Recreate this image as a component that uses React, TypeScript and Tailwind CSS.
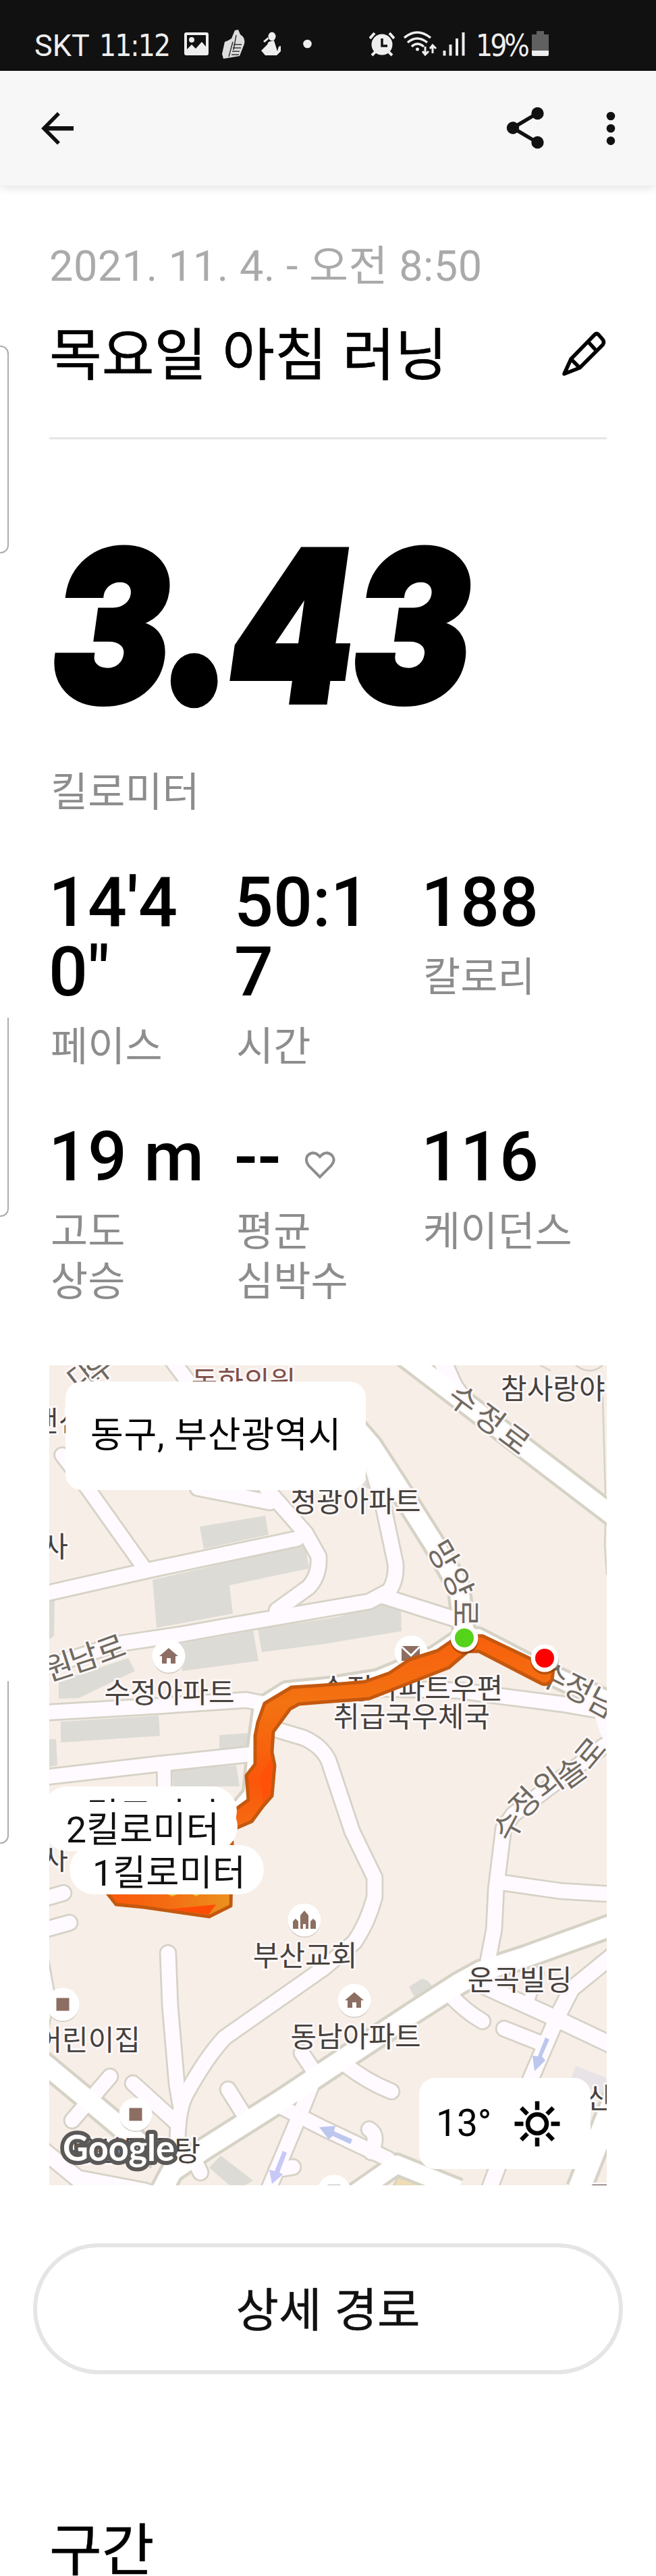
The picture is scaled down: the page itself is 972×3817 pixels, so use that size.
import type { ReactNode } from 'react';

const stats = [
    { value: `14'40"`, label: '페이스' },
    { value: '50:17', label: '시간' },
    { value: '188', label: '칼로리' },
    { value: '19 m', label: '고도\n상승' },
    { value: '--', label: '평균\n심박수', heart: true },
    { value: '116', label: '케이던스' },
];

// [path, width] of the narrow streets
const streets: [string, number][] = [
    ['M60 2364 L73 2361 L223 2327 L440 2281', 22],
    ['M92 2157 L131 2208 L212 2322', 21],
    ['M250 2010 L280 2050 L400 2213 L453 2273 L472 2307 Q474 2335 457 2353 L410 2387', 22],
    ['M293 2206 L400 2227', 22],
    ['M60 2474 L173 2437 L267 2423 L333 2411 L547 2374 L577 2358 Q588 2340 586 2318 L568 2233 L550 2170', 22],
    ['M567 2366 L690 2405', 22],
    ['M652 2010 L672 2055 L690 2080', 26],
    ['M60 2539 L233 2529 L365 2520 L395 2526', 22],
    ['M60 2635 L233 2615 L375 2600', 22],
    ['M243 2618 L244 2670', 20],
    ['M560 2503 L680 2506 L747 2515 L833 2526 L915 2540', 22],
    ['M910 2530 L910 2580 L895 2588 L760 2690 L746 2710 L735 2800 L732 2860 L722 2912', 22],
    ['M740 2790 L830 2803 L910 2808', 22],
    ['M400 2561 L450 2576 Q477 2588 487 2610 L522 2715 L555 2783 L555 2812 Q545 2850 525 2879 L480 2917 L333 3020 Q305 3050 275 3105 Q262 3130 263 3190', 22],
    ['M249 2895 L252 2973 L262 3090 L268 3125', 22],
    ['M163 3078 L107 3143', 22],
    ['M197 3088 L262 3147', 22],
    ['M338 3097 L368 3145', 22],
    ['M447 3043 L470 3077', 22],
    ['M297 3220 L285 3195', 22],
    ['M462 3090 L442 3140 L398 3245', 22],
    ['M415 3122 L480 3155 L575 3200', 22],
    ['M434 3212 L410 3216', 22],
    ['M547 3156 Q562 3165 550 3190', 22],
    ['M665 2955 Q690 2982 715 2996', 22],
    ['M505 3055 Q540 3084 580 3100', 22],
    ['M747 3007 L800 3028', 22],
    ['M705 2938 L813 2987 L912 3034', 24],
    ['M784 2964 L797 2925', 16],
    ['M912 2895 L847 2948 L827 2987 L787 3080 L725 3245', 23],
    ['M60 2816 L94 2806', 22],
    ['M60 2862 L103 2850', 22],
    ['M60 3184 L115 3229 L215 3248', 24],
    ['M60 2900 L71 2960 L60 3010', 20],
];

const avenues: [string, number][] = [
    ['M580 1996 L920 2256', 29],
    ['M500 2085 L550 2143 L589 2203 L642 2287 L680 2353 L689 2430', 30],
    ['M350 2690 L375 2660 L382 2590 L390 2530 L425 2508 L485 2502 L560 2490 L645 2455 L685 2428 L708 2428 L785 2468 L915 2528', 28],
    ['M60 3054 L73 3065 L137 3118 L235 3200', 30],
    ['M238 3250 L255 3218 L300 3187 L417 3113 L480 3071 L613 2983 L680 2940 L713 2922 L780 2900 L910 2853', 31],
    ['M525 3252 L588 3208 L680 3245', 28],
    ['M915 3100 L858 3244', 34],
];

const blocks = [
    '296,2263 393,2247 398,2275 302,2296',
    '226,2342 452,2290 458,2325 340,2350 345,2392 232,2413',
    '73,2373 81,2373 80,2425 73,2430',
    '265,2437 375,2417 383,2462 270,2477',
    '382,2415 500,2397 567,2377 594,2387 595,2418 480,2437 388,2449',
    '87,2492 190,2458 200,2477 117,2517 87,2518',
    '90,2552 235,2543 237,2573 90,2583',
    '325,2572 368,2569 370,2590 325,2592',
    '73,2578 83,2578 85,2617 73,2619',
    '255,2623 350,2617 355,2648 257,2648',
    '327,3195 375,3232 363,3239 340,3239 310,3213',
    '625,2933 634,2936 643,2947 615,2962 606,2945',
    '535,2206 550,2182 556,2206',
];

const places: { t: string; x: number; y: number; a?: 'start' | 'middle' | 'end'; c?: string }[] = [
    { t: '동화의원', x: 361, y: 2063, c: '#7d5048' },
    { t: '참사랑야', x: 742, y: 2074, a: 'start' },
    { t: '맨션', x: 48, y: 2122, a: 'start' },
    { t: '청광아파트', x: 527, y: 2241 },
    { t: '사', x: 101, y: 2308, a: 'end' },
    { t: '수정아파트', x: 251, y: 2524 },
    { t: '수정아파트우편', x: 610, y: 2518 },
    { t: '취급국우체국', x: 610, y: 2560 },
    { t: '사', x: 101, y: 2771, a: 'end' },
    { t: '부산교회', x: 452, y: 2914 },
    { t: '운곡빌딩', x: 770, y: 2950 },
    { t: '동남아파트', x: 527, y: 3034 },
    { t: '어린이집', x: 208, y: 3039, a: 'end' },
    { t: '동신목욕탕', x: 297, y: 3203, a: 'end' },
    { t: '산', x: 869, y: 3125, a: 'start' },
    { t: '도', x: 871, y: 3270, a: 'start' },
];

// street names are set one syllable at a time along the curve
const roadSigns: [string, number, number, number][] = [
    ['대', 122, 2037, -38],
    ['우', 148, 2028, -38],
    ['수', 687, 2075, 37],
    ['정', 726, 2104, 37],
    ['로', 763, 2133, 37],
    ['망', 657, 2305, 60],
    ['양', 679, 2346, 66],
    ['로', 690, 2391, 90],
    ['원', 87, 2470, -18],
    ['남', 124, 2457, -18],
    ['로', 164, 2444, -20],
    ['수', 820, 2486, 26],
    ['정', 857, 2503, 26],
    ['남', 893, 2524, 28],
    ['수', 753, 2706, -62],
    ['정', 777, 2672, -45],
    ['외', 812, 2643, -36],
    ['솔', 846, 2627, -36],
    ['로', 874, 2598, -50],
];

const routeTop =
    'M345 2685 L368 2668 L365 2632 L378 2615 L378 2573 L382 2553 L392 2525 L432 2501 L480 2498 L540 2493 L577 2480 L607 2460 L648 2447 L680 2425 L715 2425 L820 2475 L818 2490 Q812 2499 803 2496 L710 2448 L693 2448 L665 2472 L547 2518 L480 2523 L443 2526 L430 2533 L405 2567 L403 2597 L407 2617 L403 2662 L390 2677 L373 2700 L345 2712 Z';
const routeBottom = 'M150 2795 L172 2823 L213 2827 L310 2841 L342 2825 L344 2730 L300 2730 Z';

function Poi({ x, y, children }: { x: number; y: number; children: ReactNode }) {
    return (
        <g transform={`translate(${x} ${y})`} fill="#8d6e63">
            <circle cy="2" r="24" fill="#cdc7c0" />
            <circle r="24.5" fill="#fff" />
            {children}
        </g>
    );
}

const house = <path d="M0 -12 L14 0 H10 V11 H3 V3 H-3 V11 H-10 V0 H-14 Z" />;
const square = <rect x="-9.5" y="-9.5" width="19" height="19" />;

function MarkerDot({ x, y, color }: { x: number; y: number; color: string }) {
    return (
        <g>
            <circle cx={x} cy={y + 3} r="21" fill="#000" opacity="0.25" />
            <circle cx={x} cy={y} r="20.5" fill="#fff" />
            <circle cx={x} cy={y} r="14" fill={color} />
        </g>
    );
}

function RouteMap() {
    return (
        <svg className="block h-full w-full" viewBox="73 2024 826 1215">
            <defs>
                <linearGradient id="route" x1="0" y1="0" x2="0" y2="1">
                    <stop offset="0" stopColor="#f8600d" />
                    <stop offset="0.35" stopColor="#f37312" />
                    <stop offset="0.75" stopColor="#fb560a" />
                    <stop offset="1" stopColor="#f46c12" />
                </linearGradient>
                <linearGradient id="routeEnd" x1="0" y1="0" x2="1" y2="0">
                    <stop offset="0" stopColor="#fb560a" />
                    <stop offset="0.5" stopColor="#f46c12" />
                    <stop offset="1" stopColor="#eb931e" />
                </linearGradient>
            </defs>
            <rect x="73" y="2024" width="826" height="1215" fill="#f6eee7" />
            {blocks.map((p) => (
                <polygon key={p} points={p} fill="#dddbd6" />
            ))}
            <polygon points="853,3062 899,3080 899,3107 845,3085" fill="#e8e3e6" />
            <polygon points="590,3227 628,3240 583,3240" fill="#f0ddb4" stroke="#d6d2c6" strokeWidth="3" />
            <g fill="none" strokeLinejoin="round">
                {streets.map(([d, w]) => (
                    <path key={d} d={d} stroke="#d6d2c6" strokeWidth={w + 4.5} strokeLinecap="round" />
                ))}
                {avenues.map(([d, w]) => (
                    <path key={d} d={d} stroke="#d6d2c6" strokeWidth={w + 7} />
                ))}
                {streets.map(([d, w]) => (
                    <path key={d} d={d} stroke="#fefaff" strokeWidth={w - 1} strokeLinecap="round" />
                ))}
                {avenues.map(([d, w]) => (
                    <path key={d} d={d} stroke="#fff" strokeWidth={w - 2} />
                ))}
                <path d="M893 2070 L897 2215 M897 2260 L896 2290 L899 2335 M853 2024 Q874 2040 893 2024 M800 2024 L816 2032" stroke="#d6d2c6" strokeWidth="2.5" />
            </g>
            <polygon points="520,2085 552,2125 600,2215 565,2235 545,2180" fill="#fff" />
            <polygon points="880,2540 899,2530 899,2590 889,2568" fill="#fefaff" />

            {/* one-way arrows */}
            <g fill="#bcc7ee">
                <path d="M808 3020 L814 3023 L803 3048 L808 3054 L792 3070 L789 3047 L797 3048 Z" />
                <path d="M473 3153 L497 3151 L495 3159 L522 3171 L519 3178 L493 3166 L487 3171 Z" />
                <path d="M419 3188 L425 3191 L414 3220 L419 3223 L403 3237 L399 3216 L407 3218 Z" fill="#c6c8f5" />
            </g>

            <Poi x={250} y={2455}>{house}</Poi>
            <Poi x={609} y={2449}>
                <path d="M-14 -9 H13 V13 H-14 Z" />
                <path d="M-14 -8 L0 5 L13 -8" fill="none" stroke="#fff" strokeWidth="3" />
            </Poi>
            <Poi x={451} y={2846}>
                <path d="M-6 13 V-7 L0 -14 L6 -7 V13 H2 V6 H-2 V13 Z M-17 13 V2 L-13 -2 L-9 2 V13 Z M9 13 V2 L13 -2 L17 2 V13 Z" />
            </Poi>
            <Poi x={93} y={2971}>{square}</Poi>
            <Poi x={201} y={3134}>{square}</Poi>
            <Poi x={525} y={2965}>{house}</Poi>
            <Poi x={495} y={3248}>{square}</Poi>

            <g
                className="[font-family:'Noto_Sans_CJK_KR',sans-serif]"
                stroke="#fdf7f8"
                strokeWidth="6"
                strokeLinejoin="round"
                paintOrder="stroke"
            >
                {roadSigns.map(([t, x, y, r]) => (
                    <text key={t + x} fontSize="46" textAnchor="middle" fill="#6f6a60" transform={`translate(${x} ${y}) rotate(${r})`} y="17">
                        {t}
                    </text>
                ))}
                {places.map((p) => (
                    <text key={p.t + p.y} fontSize="42" x={p.x} y={p.y} textAnchor={p.a ?? 'middle'} fill={p.c ?? '#45413d'}>
                        {p.t}
                    </text>
                ))}
            </g>

            <g stroke="#c4580f" strokeWidth="5" strokeLinejoin="round">
                <path d={routeTop} fill="url(#route)" />
                <path d={routeBottom} fill="url(#routeEnd)" />
            </g>
            <path d="M250 2830 L320 2823 L309 2838 Z" fill="#ff4c05" />
            <path d="M245 2806 L268 2806 L255 2811 Z M283 2806 L300 2806 L290 2811 Z" fill="#e6c33a" />
            <path d="M385 2636 L402 2604 L404 2618 L400 2660 L390 2672 Z" fill="#ff5208" />
            <MarkerDot x={688} y={2428} color="#55d31a" />
            <MarkerDot x={807} y={2458} color="#ff0000" />

            <text
                className="[font-family:Lato,sans-serif]"
                x="93"
                y="3203"
                fontSize="54"
                fontWeight="700"
                textLength="166"
                lengthAdjust="spacingAndGlyphs"
                fill="#fff"
                stroke="#5b5957"
                strokeWidth="12"
                strokeLinejoin="round"
                paintOrder="stroke"
            >
                Google
            </text>
        </svg>
    );
}

function KmPill({ children, className }: { children: ReactNode; className: string }) {
    return (
        <div className={`absolute h-[73px] w-[288px] rounded-full bg-white pl-[34px] text-[53.5px] leading-[73px] whitespace-nowrap text-[#111] ${className}`}>
            {children}
        </div>
    );
}

function StatusBar() {
    return (
        <div className="flex h-[105px] items-start bg-[#111] pt-[44px] pl-[51px] text-[44px] leading-[48px] whitespace-nowrap text-[#eee]">
            <span className="w-[80px] [font-family:Roboto,sans-serif] text-[45px]">SKT</span>
            <span className="ml-4 w-[106px] [font-family:'DejaVu_Sans_Condensed','DejaVu_Sans',sans-serif] font-stretch-condensed tracking-[-2px]">11:12</span>
            <svg className="ml-5 h-11 w-9" viewBox="273 44 36 44">
                <path fill="#eee" fillRule="evenodd" d="M276 48 H306 Q309 48 309 51 V79 Q309 82 306 82 H276 Q273 82 273 79 V51 Q273 48 276 48 Z M277 52 V73 L284 66 L290 72 L299 62 L305 69 V52 Z" />
                <circle cx="284" cy="59" r="4" fill="#eee" />
            </svg>
            <svg className="ml-[19px] h-11 w-9" viewBox="328 44 36 44">
                <path fill="#ddd" d="M348 45 L353 44 L356 51 Q364 56 362 65 L355 83 L331 87 L329 80 L333 62 Q339 60 343 57 Z" />
                <path d="M345 62 L339 84 M350 52 L346 74 M346 66 h12 M345 71 h12 M344 76 h11 M343 81 h11" stroke="#333" strokeWidth="1.5" />
            </svg>
            <svg className="ml-[22px] h-11 w-8" viewBox="386 44 32 44">
                <ellipse cx="403" cy="54" rx="5.5" ry="6.5" fill="#eee" />
                <path fill="#eee" d="M398 62 L406 60 L411 76 L413 69 L416 68 L416 76 L410 82 H393 L387 75 L396 66 Z M390 61 L397 55 L398 58 L392 63 Z" />
            </svg>
            <svg className="ml-[31px] h-11 w-[13px]" viewBox="449 44 13 44">
                <circle cx="455.5" cy="65" r="6.3" fill="#eee" />
            </svg>
            <svg className="ml-[85px] h-11 w-[38px]" viewBox="547 44 38 44">
                <circle cx="566" cy="66" r="15.5" fill="#eee" />
                <path d="M566 57 V68 H574" fill="none" stroke="#111" strokeWidth="3.5" />
                <path d="M548 57 L555 49 M584 57 L577 49 M556 77 L551 82 M576 77 L581 82" stroke="#eee" strokeWidth="4" />
            </svg>
            <svg className="ml-[13px] h-11 w-[50px]" viewBox="598 44 50 44" fill="none" stroke="#eee" strokeWidth="3.5">
                <path d="M599 56 Q618 40 638 56 M604 63 Q618 51 633 63 M610 69 Q618 61 628 69" />
                <circle cx="618.5" cy="73" r="2.5" fill="#eee" stroke="none" />
                <path d="M630 69 V80 M626 76 L630 81 L635 76 M641 79 V69 M637 72 L641 67 L646 72" strokeWidth="3" />
            </svg>
            <svg className="ml-2 h-11 w-[34px]" viewBox="656 44 34 44">
                <path d="M658.5 75 V82.5 M667.5 66 V82.5 M677 57 V82.5 M686.5 48 V82.5" stroke="#eee" strokeWidth="4" />
            </svg>
            <span className="ml-[15px] w-[76px] [font-family:'DejaVu_Sans_Condensed','DejaVu_Sans',sans-serif] font-stretch-condensed tracking-[-4px]">19%</span>
            <svg className="ml-[7px] h-11 w-[25px]" viewBox="788 44 25 44">
                <path fill="#606060" d="M795 46 H806 V51 H813 V75 H788 V51 H795 Z" />
                <path fill="#eee" d="M788 75 H813 V81 Q813 83 811 83 H790 Q788 83 788 81 Z" />
            </svg>
        </div>
    );
}

function Toolbar() {
    return (
        <header className="flex h-[170px] items-center justify-between bg-[#f7f7f7] pr-[60px] pl-[60px] shadow-[0_3px_14px_rgba(0,0,0,0.12)]">
            <svg className="h-12 w-[50px]" viewBox="60 166 50 48" fill="none" stroke="#111">
                <path d="M109 190.3 H66" strokeWidth="6.5" />
                <path d="M87 168 L65 190.3 L87 212.5" strokeWidth="5.5" />
            </svg>
            <div className="flex gap-[92px]">
                <svg className="h-[62px] w-[56px]" viewBox="749 159 56 62">
                    <path d="M795 168 L759 189.5 L795 211" fill="none" stroke="#111" strokeWidth="5.5" />
                    <g fill="#111">
                        <circle cx="759" cy="189.5" r="9.2" />
                        <circle cx="795.5" cy="168" r="9.2" />
                        <circle cx="795.5" cy="211" r="9.2" />
                    </g>
                </svg>
                <svg className="h-[62px] w-[14px]" viewBox="898 159 14 62" fill="#111">
                    <circle cx="905" cy="172" r="6.3" />
                    <circle cx="905" cy="190.3" r="6.3" />
                    <circle cx="905" cy="208.6" r="6.3" />
                </svg>
            </div>
        </header>
    );
}

export default function App() {
    return (
        <div className="relative h-[3817px] w-[972px] overflow-hidden bg-white [font-family:Roboto,'Noto_Sans_CJK_KR',sans-serif] text-black">
            <StatusBar />
            <Toolbar />

            {/* edges of the drawer handles */}
            <div className="absolute top-[512px] -left-4 h-[308px] w-[29px] rounded-xl border-2 border-[#adadad]" />
            <div className="absolute top-[1508px] -left-4 h-[295px] w-[29px] rounded-b-xl border-2 border-t-0 border-[#adadad]" />
            <div className="absolute top-[2491px] -left-4 h-[241px] w-[29px] rounded-b-xl border-2 border-t-0 border-[#adadad]" />

            <main className="px-[73px] pt-[85px]">
                <p className="text-[63px] leading-[70px] tracking-[0.5px] whitespace-nowrap text-[#aaa]">2021. 11. 4. - 오전 8:50</p>
                <div className="mt-12 flex items-start justify-between">
                    <h1 className="text-[84.5px] leading-[100px] whitespace-nowrap [word-spacing:2px] [-webkit-text-stroke:0.6px_#000]">목요일 아침 러닝</h1>
                    <svg className="mt-3 h-[68px] w-[68px]" viewBox="830 490 68 68" fill="none" stroke="#000" strokeWidth="5.5" strokeLinejoin="round">
                        <path d="M835 554 L845 532 L880 496 Q883 493 886 496 L892 503 Q895 507 892 511 L858 545 Z" />
                        <path d="M870 506 L882 519 M845 532 L858 545" />
                    </svg>
                </div>
                <div className="mt-[70px] h-[3px] bg-[#e5e5e5]" />

                <div className="mt-[109px] h-[336px] pl-1">
                    <span className="inline-flex origin-left scale-x-[0.845] text-[310px] leading-[336px] font-black italic [font-family:Inter,sans-serif] [-webkit-text-stroke:8px_#000]">
                        <span>3</span>
                        <span className="-mt-[17px] mr-[17px] ml-[13px] [font-family:Lato,sans-serif] [-webkit-text-stroke:32px_#000]">.</span>
                        <span className="tracking-[-2px]">43</span>
                    </span>
                </div>
                <p className="mt-[42px] pl-[2px] text-[60px] leading-[74px] text-[#8d8d8d]">킬로미터</p>

                <div className="mt-[73px] grid grid-cols-[275px_277px_1fr] gap-y-[73px] pl-[2px]">
                    {stats.map((s) => (
                        <div key={s.label}>
                            <div className="-ml-[3px] flex w-[236px] items-center pt-px text-[102px] leading-[103px] font-medium break-all">
                                {s.value}
                                {s.heart && (
                                    <svg className="mt-6 ml-[33px] h-[46px] w-[50px]" viewBox="450 1703 50 46" fill="none" stroke="#8d8d8d" strokeWidth="4">
                                        <path d="M475 1743 L459 1727 Q452 1718 457 1711 Q466 1703 475 1713 Q484 1703 493 1711 Q499 1718 491 1727 Z" />
                                    </svg>
                                )}
                            </div>
                            <p className="mt-[23px] text-[60px] leading-[74px] whitespace-pre-line text-[#8d8d8d]">{s.label}</p>
                        </div>
                    ))}
                </div>

                <section className="relative mt-[86px] h-[1215px] overflow-hidden">
                    <RouteMap />
                    <div className="absolute top-6 left-6 h-[161px] w-[445px] rounded-3xl bg-white pl-[37px] text-[53px] leading-[161px] tracking-[0.8px] whitespace-nowrap">동구, 부산광역시</div>
                    <KmPill className="top-[624px] -left-[10px] pt-[8px]">3킬로미터</KmPill>
                    <KmPill className="top-[647px] -left-[9px] pt-[5px]">2킬로미터</KmPill>
                    <KmPill className="top-[711px] left-[30px] pt-[5px]">1킬로미터</KmPill>
                    <div className="absolute right-6 bottom-6 flex h-[135px] w-[254px] items-center rounded-3xl bg-white pl-[25px] text-[55px]">
                        <span className="w-[83px] whitespace-nowrap">13°</span>
                        <svg className="ml-[32px] h-[70px] w-[70px]" viewBox="-35 -35 70 70" fill="none" stroke="#000" strokeWidth="6.5">
                            <circle r="14" />
                            {[0, 45, 90, 135, 180, 225, 270, 315].map((a) => (
                                <path key={a} d="M0 -20.5 V-33.5" transform={`rotate(${a})`} />
                            ))}
                        </svg>
                    </div>
                </section>

                <button className="mt-[86px] -ml-6 block h-[194px] w-[874px] rounded-full border-[6px] border-[#e5e5e5] pt-2 text-[69px] text-[#111] [word-spacing:2px] [-webkit-text-stroke:0.5px_#111]">
                    상세 경로
                </button>
                <h2 className="mt-[213px] text-[84.5px] leading-[100px] [-webkit-text-stroke:0.6px_#000]">구간</h2>
            </main>
        </div>
    );
}
